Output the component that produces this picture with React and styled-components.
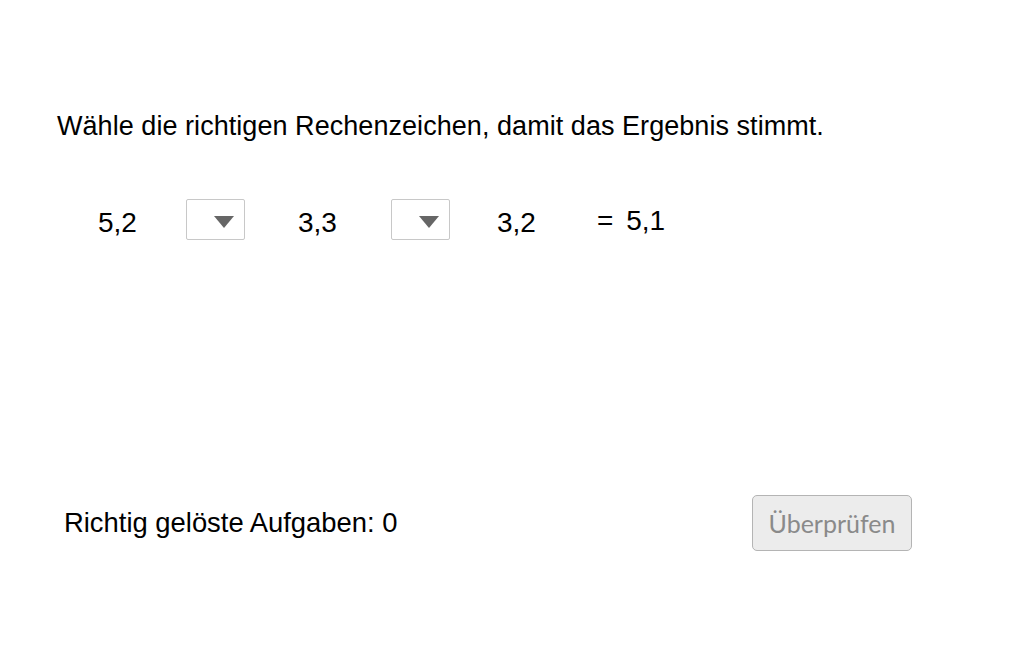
import React from 'react'
import styled, { createGlobalStyle } from 'styled-components';

const GlobalStyle = createGlobalStyle`
    html, body {
        margin: 0;
        padding: 0;
        background: #ffffff;
    }
`;

const StyledApplet = styled.div`
    width: 1032px;
    height: 645px;
    box-sizing: border-box;
    padding: 110px 0 0 57px;
    font-family: "Liberation Sans", Arial, sans-serif;
    color: #000;

    & .applet__task {
        margin: 0;
        font-size: 27px;
        font-weight: normal;
        line-height: 32px;
        letter-spacing: 0.05px;
    }
`;

const EquationRow = styled.div`
    display: grid;
    grid-template-columns: 88px 112px 93px 106px 100px auto;
    align-items: center;
    margin: 53px 0 0 41px;
    height: 42px;
`;

const Operand = styled.span`
    font-family: "Liberation Sans", Arial, sans-serif;
    font-size: 28px;
    line-height: 42px;
    padding-top: ${({ $lift }) => ($lift ? '3px' : '7px')};
`;

const Result = styled(Operand)`
    word-spacing: 5px;
`;

const Select = styled.div`
    width: 59px;
    height: 41px;
    box-sizing: border-box;
    border: 1px solid #c8c8c8;
    border-radius: 2px;
    background: #fff;
    display: flex;
    align-items: center;
    justify-content: flex-end;
    padding: 5px 10px 0 0;
`;

const Footer = styled.div`
    display: flex;
    align-items: center;
    justify-content: space-between;
    width: 848px;
    margin: 258px 0 0 7px;

    & .footer__score {
        font-size: 27.4px;
    }
`;

const CheckButton = styled.button`
    width: 160px;
    height: 56px;
    box-sizing: border-box;
    border: 1px solid #b4b4b4;
    border-radius: 5px;
    background: #ececec;
    color: #8a8a8a;
    font-family: Lato, "Liberation Sans", sans-serif;
    font-size: 25px;
    padding: 0;
`;

const Arrow = () => (
    <svg width="20" height="12" viewBox="0 0 20 12">
        <path d="M0 0 H20 L10 12 Z" fill="#666" />
    </svg>
)

const App = () => {
    return (
        <>
            <GlobalStyle />
            <StyledApplet>
                <h1 className="applet__task">Wähle die richtigen Rechenzeichen, damit das Ergebnis stimmt.</h1>
                <EquationRow>
                    <Operand>5,2</Operand>
                    <Select><Arrow /></Select>
                    <Operand>3,3</Operand>
                    <Select><Arrow /></Select>
                    <Operand>3,2</Operand>
                    <Result $lift>= 5,1</Result>
                </EquationRow>
                <Footer>
                    <span className="footer__score">Richtig gelöste Aufgaben: 0</span>
                    <CheckButton>Überprüfen</CheckButton>
                </Footer>
            </StyledApplet>
        </>
    )
}

export default App
